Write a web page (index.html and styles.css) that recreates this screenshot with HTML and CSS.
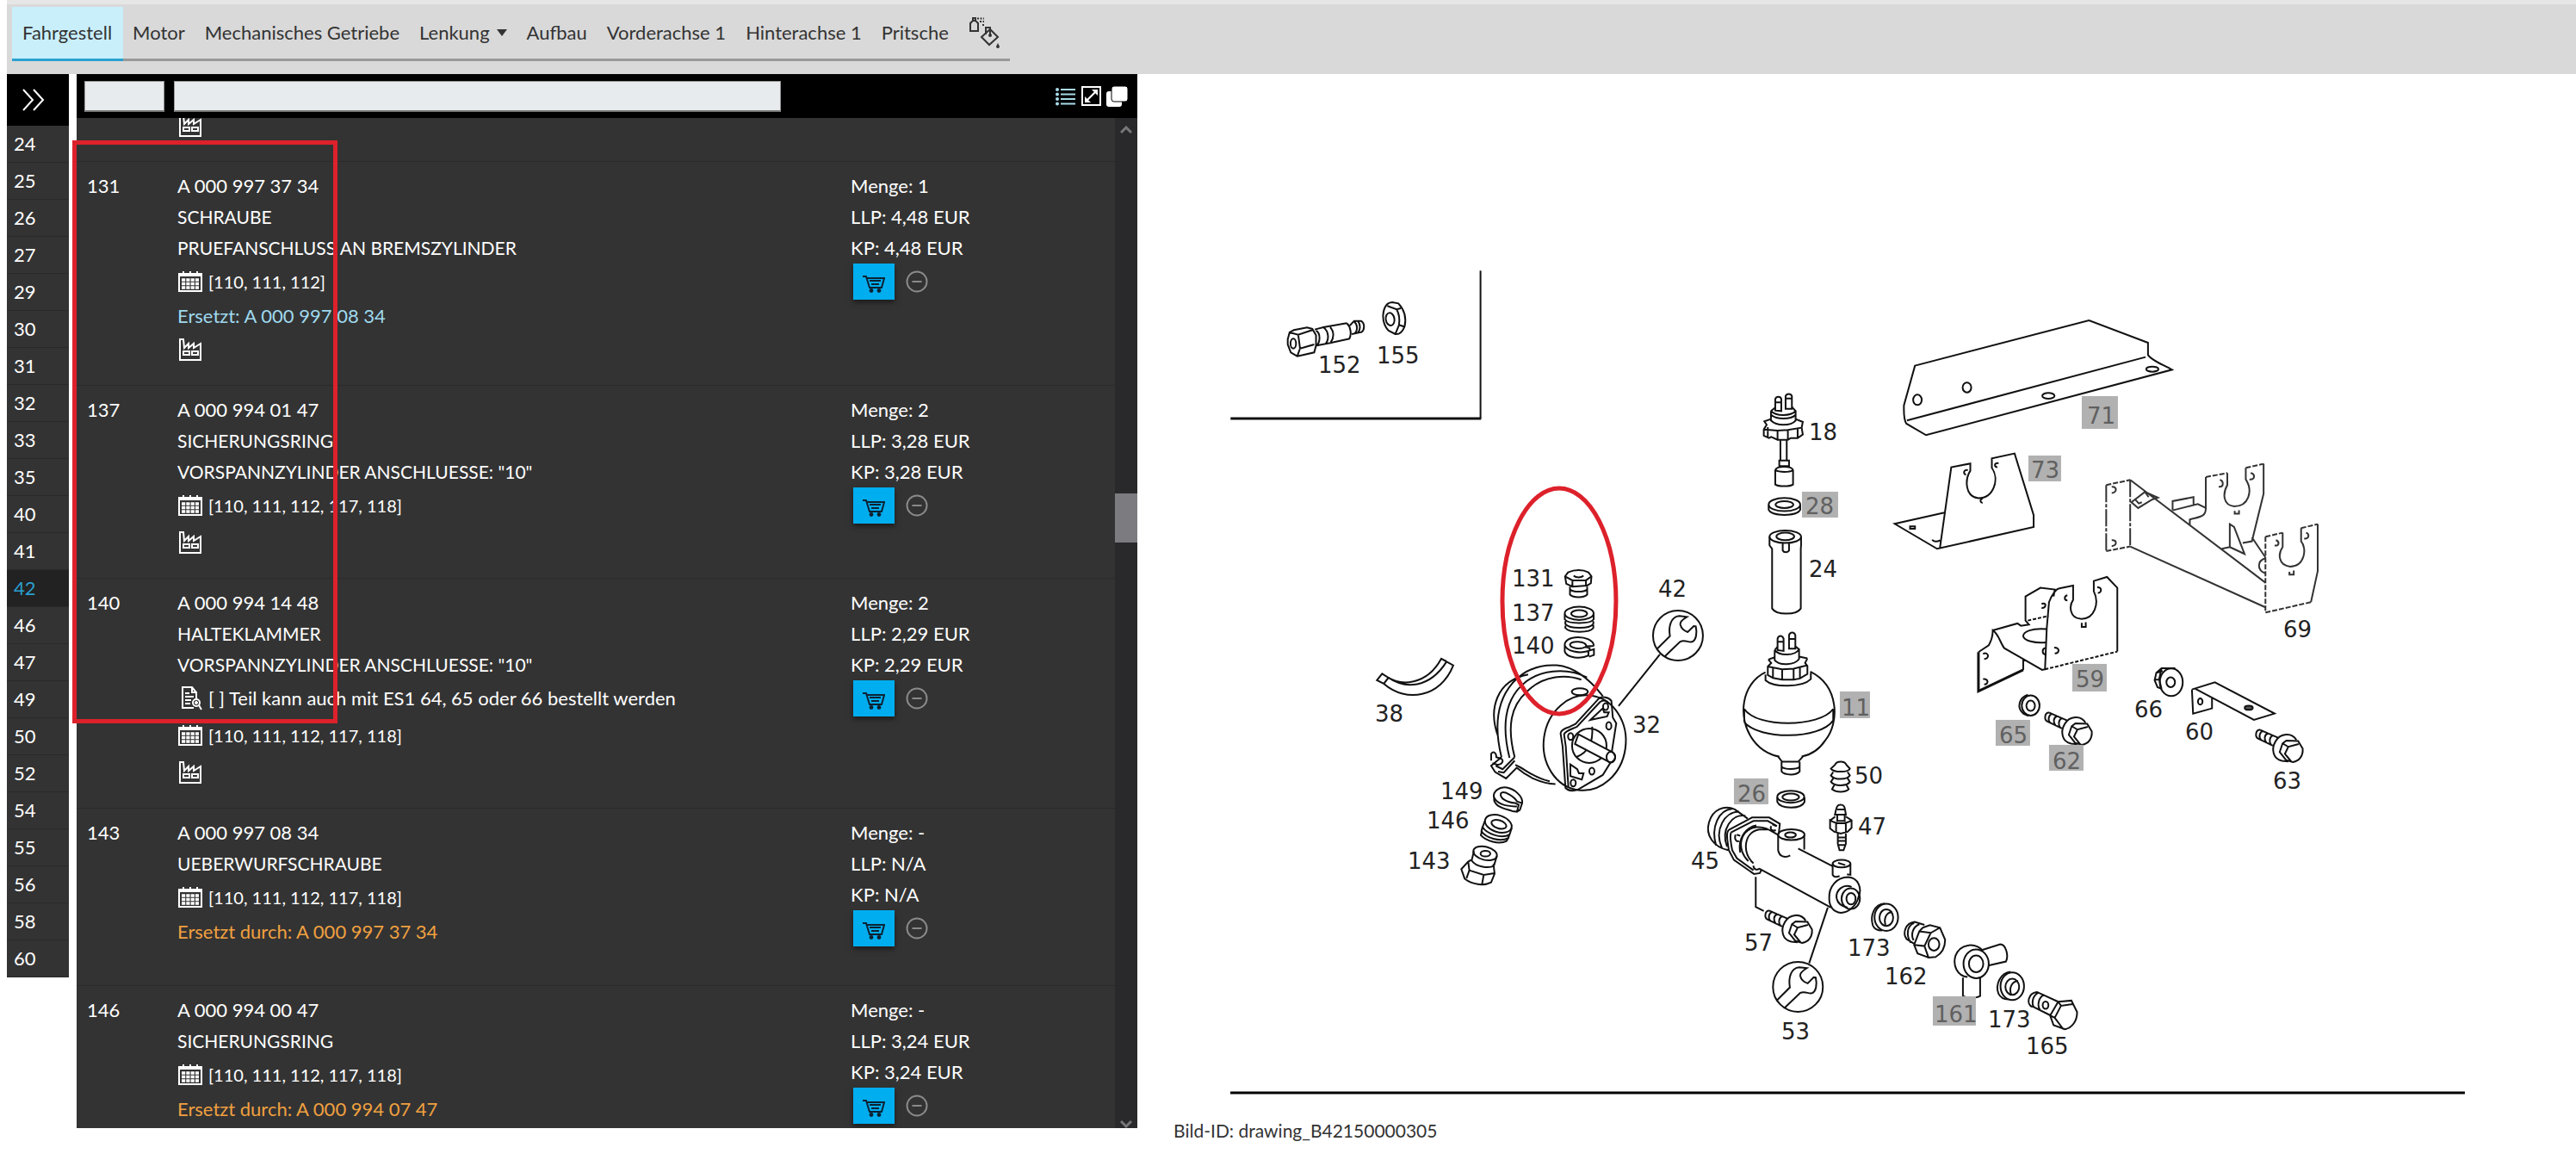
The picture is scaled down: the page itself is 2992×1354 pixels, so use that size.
FILE: index.html
```html
<!DOCTYPE html>
<html lang="de">
<head>
<meta charset="utf-8">
<title>Fahrgestell</title>
<link rel="stylesheet" href="styles.css">
</head>
<body>
<svg class="sprite" aria-hidden="true">
  <symbol id="calendar" viewBox="0 0 28 24">
    <path d="M1 3h26v20H1z" fill="none" stroke="currentColor" stroke-width="2"/>
    <path d="M1 3h26v3H1z" fill="currentColor"/>
    <path d="M6 0v5M14 0v5M22 0v5" stroke="currentColor" stroke-width="2"/>
    <path d="M4 10h20M4 14.500h20M4 19h20" stroke="currentColor" stroke-width="3.400" stroke-dasharray="4.200 1.100"/>
  </symbol>
  <symbol id="factory" viewBox="0 0 26 26">
    <path d="M1 25V1h4l1 10 5-5v5l6-5v5l8-5v19z" fill="none" stroke="currentColor" stroke-width="2"/>
    <path d="M5 15h7v4H5zM15 15h7v4h-7z" fill="none" stroke="currentColor" stroke-width="2"/>
  </symbol>
  <symbol id="note" viewBox="0 0 26 28">
    <path d="M19 14V7l-5-6H3v24h13M14 1v6h5" fill="none" stroke="currentColor" stroke-width="2"/>
    <path d="M6 8h5M6 12h10M6 16h7M6 20h6" stroke="currentColor" stroke-width="2"/>
    <circle cx="19" cy="19" r="4" fill="none" stroke="currentColor" stroke-width="2"/>
    <path d="M22 22l3 5M17 19h4M19 17v4" stroke="currentColor" stroke-width="2"/>
  </symbol>
  <symbol id="cart" viewBox="0 0 26 20">
    <path d="M0 1h4l4 13h14l3-11H5" fill="none" stroke="currentColor" stroke-width="2"/>
    <path d="M8 6h13M10 10h9" stroke="currentColor" stroke-width="2"/>
    <circle cx="10" cy="17.500" r="2.400" fill="currentColor"/>
    <circle cx="19" cy="17.500" r="2.400" fill="currentColor"/>
  </symbol>
  <symbol id="minus" viewBox="0 0 26 26">
    <circle cx="13" cy="13" r="11.500" fill="none" stroke="currentColor" stroke-width="2"/>
    <path d="M7.500 13h11" stroke="currentColor" stroke-width="2"/>
  </symbol>
</svg>

<header class="topbar">
  <nav class="tabs">
    <a class="tab active" href="#">Fahrgestell</a>
    <a class="tab" href="#">Motor</a>
    <a class="tab" href="#">Mechanisches Getriebe</a>
    <a class="tab" href="#">Lenkung <span class="caret"></span></a>
    <a class="tab" href="#">Aufbau</a>
    <a class="tab" href="#">Vorderachse 1</a>
    <a class="tab" href="#">Hinterachse 1</a>
    <a class="tab" href="#">Pritsche</a>
    <a class="tab" href="#" aria-label="Lacke"><svg class="paint" viewBox="0 0 36 36">
      <path d="M2 16V7l3-3h3l3 3v9zM5 4V1h3v3" fill="none" stroke="#333" stroke-width="2"/>
      <path d="M10 1.500h8M13 5h5M16 9h2" stroke="#333" stroke-width="2" stroke-dasharray="2 1.500"/>
      <path d="M25 14l9 9-10 9-9-9zM20 20v-8h5v10" fill="none" stroke="#333" stroke-width="2"/>
      <circle cx="25" cy="21" r="2" fill="#333"/>
      <path d="M34 30l2 4a2 2 0 0 1-4 0z" fill="#333"/>
    </svg></a>
  </nav>
</header>

<main class="workspace">
  <aside class="groups">
    <button class="expand" type="button" aria-label="Aufklappen"><svg width="28" height="26" viewBox="0 0 28 26"><path d="M2 1l11 12L2 25M14 1l11 12-11 12" fill="none" stroke="#fff" stroke-width="2"/></svg></button>
    <a class="group" href="#">24</a>
    <a class="group" href="#">25</a>
    <a class="group" href="#">26</a>
    <a class="group" href="#">27</a>
    <a class="group" href="#">29</a>
    <a class="group" href="#">30</a>
    <a class="group" href="#">31</a>
    <a class="group" href="#">32</a>
    <a class="group" href="#">33</a>
    <a class="group" href="#">35</a>
    <a class="group" href="#">40</a>
    <a class="group" href="#">41</a>
    <a class="group current" href="#">42</a>
    <a class="group" href="#">46</a>
    <a class="group" href="#">47</a>
    <a class="group" href="#">49</a>
    <a class="group" href="#">50</a>
    <a class="group" href="#">52</a>
    <a class="group" href="#">54</a>
    <a class="group" href="#">55</a>
    <a class="group" href="#">56</a>
    <a class="group" href="#">58</a>
    <a class="group" href="#">60</a>
  </aside>

  <section class="parts">
    <div class="toolbar">
      <input class="field field-pos" type="text" aria-label="Position">
      <input class="field field-name" type="text" aria-label="Bezeichnung">
      <div class="tools">
        <button class="tool" type="button" aria-label="Liste"><svg width="24" height="22" viewBox="0 0 24 22"><path d="M6 3h17M6 8.500h17M6 14h17M6 19.500h17" stroke="#a9dcea" stroke-width="2"/><g fill="#a9dcea"><circle cx="2" cy="3" r="2"/><circle cx="2" cy="8.500" r="2"/><circle cx="2" cy="14" r="2"/><circle cx="2" cy="19.500" r="2"/></g></svg></button>
        <button class="tool" type="button" aria-label="Vergrößern"><svg width="23" height="23" viewBox="0 0 23 23"><path d="M1 1h21v21H1z" fill="none" stroke="#fff" stroke-width="2"/><path d="M19 4v7l-7-7zM4 19v-7l7 7z" fill="#fff"/><path d="M6 17L17 6" stroke="#fff" stroke-width="2"/></svg></button>
        <button class="tool" type="button" aria-label="Fenster"><svg width="25" height="26" viewBox="0 0 25 26"><rect x="0" y="7" width="18" height="18" rx="3" fill="#fff"/><rect x="6" y="1" width="19" height="18" rx="3" fill="#fff" stroke="#000"/></svg></button>
      </div>
    </div>
    <div class="scroller">
      <ul class="list">
        <li class="part clipped"><span></span><div><p class="row"><svg class="i-factory"><use href="#factory"/></svg></p></div></li>

        <li class="part">
          <span class="pos">131</span>
          <div class="desc">
            <p>A 000 997 37 34</p><p class="name">SCHRAUBE</p><p class="name">PRUEFANSCHLUSS AN BREMSZYLINDER</p>
            <p class="row codes"><svg class="i-cal"><use href="#calendar"/></svg>[110, 111, 112]</p>
            <p class="replaces">Ersetzt: A 000 997 08 34</p>
            <p class="row"><svg class="i-factory"><use href="#factory"/></svg></p>
          </div>
          <div class="price"><p>Menge: 1</p><p>LLP: 4,48 EUR</p><p>KP: 4,48 EUR</p>
            <div class="actions"><button class="buy" type="button" aria-label="In den Warenkorb"><svg class="i-cart"><use href="#cart"/></svg></button><button class="less" type="button" aria-label="Entfernen"><svg class="i-minus"><use href="#minus"/></svg></button></div></div>
        </li>

        <li class="part">
          <span class="pos">137</span>
          <div class="desc">
            <p>A 000 994 01 47</p><p class="name">SICHERUNGSRING</p><p class="name">VORSPANNZYLINDER ANSCHLUESSE: "10"</p>
            <p class="row codes"><svg class="i-cal"><use href="#calendar"/></svg>[110, 111, 112, 117, 118]</p>
            <p class="row"><svg class="i-factory"><use href="#factory"/></svg></p>
          </div>
          <div class="price"><p>Menge: 2</p><p>LLP: 3,28 EUR</p><p>KP: 3,28 EUR</p>
            <div class="actions"><button class="buy" type="button" aria-label="In den Warenkorb"><svg class="i-cart"><use href="#cart"/></svg></button><button class="less" type="button" aria-label="Entfernen"><svg class="i-minus"><use href="#minus"/></svg></button></div></div>
        </li>

        <li class="part">
          <span class="pos">140</span>
          <div class="desc">
            <p>A 000 994 14 48</p><p class="name">HALTEKLAMMER</p><p class="name">VORSPANNZYLINDER ANSCHLUESSE: "10"</p>
            <p class="row"><svg class="i-note"><use href="#note"/></svg>[ ] Teil kann auch mit ES1 64, 65 oder 66 bestellt werden</p>
            <p class="row codes"><svg class="i-cal"><use href="#calendar"/></svg>[110, 111, 112, 117, 118]</p>
            <p class="row"><svg class="i-factory"><use href="#factory"/></svg></p>
          </div>
          <div class="price"><p>Menge: 2</p><p>LLP: 2,29 EUR</p><p>KP: 2,29 EUR</p>
            <div class="actions"><button class="buy" type="button" aria-label="In den Warenkorb"><svg class="i-cart"><use href="#cart"/></svg></button><button class="less" type="button" aria-label="Entfernen"><svg class="i-minus"><use href="#minus"/></svg></button></div></div>
        </li>

        <li class="part">
          <span class="pos">143</span>
          <div class="desc">
            <p>A 000 997 08 34</p><p class="name">UEBERWURFSCHRAUBE</p>
            <p class="row codes"><svg class="i-cal"><use href="#calendar"/></svg>[110, 111, 112, 117, 118]</p>
            <p class="replaced">Ersetzt durch: A 000 997 37 34</p>
          </div>
          <div class="price"><p>Menge: -</p><p>LLP: N/A</p><p>KP: N/A</p>
            <div class="actions"><button class="buy" type="button" aria-label="In den Warenkorb"><svg class="i-cart"><use href="#cart"/></svg></button><button class="less" type="button" aria-label="Entfernen"><svg class="i-minus"><use href="#minus"/></svg></button></div></div>
        </li>

        <li class="part">
          <span class="pos">146</span>
          <div class="desc">
            <p>A 000 994 00 47</p><p class="name">SICHERUNGSRING</p>
            <p class="row codes"><svg class="i-cal"><use href="#calendar"/></svg>[110, 111, 112, 117, 118]</p>
            <p class="replaced">Ersetzt durch: A 000 994 07 47</p>
          </div>
          <div class="price"><p>Menge: -</p><p>LLP: 3,24 EUR</p><p>KP: 3,24 EUR</p>
            <div class="actions"><button class="buy" type="button" aria-label="In den Warenkorb"><svg class="i-cart"><use href="#cart"/></svg></button><button class="less" type="button" aria-label="Entfernen"><svg class="i-minus"><use href="#minus"/></svg></button></div></div>
        </li>
      </ul>
      <div class="scrollbar">
        <svg class="arrow" viewBox="0 0 14 10"><path d="M1 8l6-6 6 6" fill="none" stroke="#77777b" stroke-width="3"/></svg>
        <div class="thumb"></div>
        <svg class="arrow" viewBox="0 0 14 10"><path d="M1 2l6 6 6-6" fill="none" stroke="#77777b" stroke-width="3"/></svg>
      </div>
    </div>
    <div class="marker"></div>
  </section>

  <figure class="picture">
    <svg class="drawing" viewBox="1321 86 1671 1190" role="img" aria-label="Explosionszeichnung">
      <defs>
        <g id="bolt">
          <path d="M14-17C-2-20-6 8 8 14L58 38M14-17L76 10M24-14C10-8 8 10 18 19M42-6C28 0 26 16 36 28M58 2C46 8 44 24 52 35"/>
          <path d="M140 18C124-10 84-6 68 22C50 52 60 84 90 91L112 93"/>
          <path d="M92 30L105 20L146 22L162 48C164 74 150 92 128 95L104 88L82 60ZM92 30L112 42L148 32M112 42L100 66L122 93"/>
        </g>
        <g id="wrench">
          <circle r="87"/>
          <path d="M-72 46L-28 2C-34-30-25-66 5-68L31-65C16-56 6-48 8-38C12-22 22-16 34-12L55-33L62-32C68-6 62 14 52 21C38 28 26 12 7 22L-46 73"/>
        </g>
      </defs>

      <!-- inset with 152 / 155, upper stack 131-140 -->
      <g transform="translate(1420 300) scale(.3571 .3333)">
        <path d="M839 43V558"/><path class="bold" d="M26 558H841"/>
        <path d="M212 282L218 258L232 250L275 241L292 246L304 268V304L298 328L243 341L222 328L212 300ZM218 258L246 266L292 250M246 266L252 314L298 300M252 314L243 341M304 252C320 262 318 296 304 304M300 248L328 240L404 226M306 304L350 295L414 280M328 240C348 256 346 286 334 299M350 240C364 256 362 278 352 292M404 226C418 240 420 266 412 281M414 234L428 218L450 218C464 226 462 250 452 257L430 262L420 264M428 220C440 232 440 252 430 262M440 218C450 232 448 250 440 260"/>
        <ellipse cx="230" cy="297" rx="9" ry="17"/>
        <path d="M522 200C524 170 534 154 552 153L572 157C592 180 598 210 592 238C584 258 574 266 562 264L540 252C526 236 522 218 522 200ZM536 166L566 178L580 174M566 178C576 196 576 216 574 232L590 238M574 232L562 264"/>
        <ellipse cx="545" cy="212" rx="14" ry="22" transform="rotate(-8 545 212)"/>
        <path d="M1114 1108L1124 1094C1145 1084 1172 1084 1190 1094L1200 1108L1198 1132L1186 1140L1138 1144L1118 1134ZM1114 1108L1138 1122H1182L1200 1108M1138 1122V1144M1182 1122V1140M1142 1106C1150 1114 1166 1114 1174 1106M1130 1144V1172C1142 1184 1174 1184 1186 1172V1144M1130 1154C1142 1164 1174 1164 1186 1154"/>
        <ellipse cx="1160" cy="1237" rx="47" ry="23"/><ellipse cx="1160" cy="1238" rx="26" ry="12"/>
        <path d="M1113 1240V1258C1125 1275 1195 1275 1207 1258V1240M1115 1264V1274C1128 1292 1194 1292 1206 1274V1264M1115 1280V1288C1128 1306 1194 1306 1206 1288V1278"/>
        <path d="M1208 1350C1206 1330 1180 1320 1156 1320C1130 1320 1112 1332 1113 1348V1370C1120 1392 1166 1398 1190 1384V1368C1160 1378 1120 1370 1113 1348M1190 1368L1208 1362V1382L1192 1388M1208 1350L1184 1352C1180 1332 1134 1332 1130 1346C1130 1358 1164 1364 1180 1354L1194 1358V1368"/>
      </g>

      <!-- brake cylinder 32, clamp 38, lower stack 143-149 -->
      <g transform="translate(1560 740) scale(.3333)">
        <path d="M118 150L136 127L158 141L142 162ZM158 141C200 168 290 170 342 75L384 98C340 210 220 230 142 162M158 141C215 180 300 180 360 86M342 75L360 84"/>
        <path d="M540 345C505 250 535 150 645 130M552 418C528 320 530 230 590 160C640 105 700 95 745 98C800 103 850 135 905 205M580 420C555 320 560 230 620 170C680 110 780 105 850 140M598 418C570 310 585 240 640 190C700 130 780 130 830 148"/>
        <ellipse cx="842" cy="368" rx="143" ry="166" transform="rotate(8 842 368)"/>
        <ellipse cx="825" cy="190" rx="28" ry="12"/>
        <path d="M552 418L516 448L530 470L568 492L605 455C640 485 690 510 740 512M598 418L556 460L532 448M598 430L560 472L540 468M516 430V406C524 396 534 402 534 418L552 424C562 430 552 446 538 444L520 440M600 445C630 455 660 490 720 502"/>
        <path d="M775 525L765 380L758 335C758 325 770 318 790 312L810 302L890 215C900 205 925 208 935 222L940 280L952 300L930 440L905 480L820 530C800 538 785 535 775 525Z"/>
        <path d="M785 520L776 380L770 338C774 326 792 322 815 312L895 226C908 216 922 222 926 232"/>
        <circle cx="858" cy="378" r="60"/><path d="M868 312C872 360 860 400 812 418"/>
        <path class="white" d="M820 338L938 400C955 412 950 430 932 437L808 372Z"/><ellipse cx="933" cy="418" rx="15" ry="19"/>
        <ellipse cx="915" cy="242" rx="9" ry="12"/><ellipse cx="926" cy="309" rx="9" ry="13"/><ellipse cx="793" cy="346" rx="9" ry="12"/><ellipse cx="867" cy="467" rx="9" ry="12"/><ellipse cx="802" cy="508" rx="9" ry="12"/>
        <path d="M862 288L905 248L910 262H926L920 276ZM792 443V484L832 496L838 474H822L816 460Z"/>
        <path d="M1104 60L960 240"/>
        <path d="M526 560C520 536 546 520 570 524C600 530 628 556 624 578L606 572C596 556 560 532 550 544C544 560 570 576 600 578L612 584L606 608L590 606C560 596 524 590 526 560ZM526 558C540 588 580 588 606 590M624 578L616 602L606 608"/>
        <ellipse cx="541" cy="650" rx="48" ry="29" transform="rotate(18 541 650)"/><ellipse cx="543" cy="652" rx="27" ry="14" transform="rotate(18 543 652)"/>
        <path d="M494 640L486 662C500 684 550 704 580 688L588 664M486 660L482 676C498 700 546 714 576 700L580 686M484 674L480 690C498 710 544 724 570 710L576 698"/>
        <ellipse cx="495" cy="753" rx="42" ry="23" transform="rotate(14 495 753)"/><ellipse cx="496" cy="754" rx="17" ry="10"/>
        <path d="M456 745L448 778C462 800 510 808 526 795L536 762M446 776L436 782L412 808L424 842C450 862 490 868 516 854L528 824L524 790M436 782L440 812L430 840M440 812L490 828L528 822M490 828L484 862"/>
      </g>

      <!-- reservoir column 18, 28, 24, 11, 26, 50 -->
      <g transform="translate(1920 440) scale(.3333)">
        <path d="M426 110V70C430 60 444 60 447 70V112ZM462 104V60C466 50 480 50 484 60V104ZM426 82H447M462 68H484"/>
        <path d="M411 112C430 132 480 130 497 112L484 98M411 112L426 100M411 112V145C430 165 480 165 497 145V112M413 126C430 142 480 142 496 126M411 140L388 148L396 160L386 176V198L404 206L412 202L434 212L470 212L480 206L504 206L522 194L518 170L522 150L497 140M400 168V204M434 178V212M470 178V212M504 170V206M388 176L434 180L470 178L518 170"/>
        <path d="M444 214V284M466 214V284M440 284H474V304H440ZM426 318C430 302 484 302 488 318V368C476 376 438 376 426 368ZM426 318C440 326 476 326 488 318"/>
        <ellipse cx="458" cy="438" rx="55" ry="23"/><ellipse cx="458" cy="438" rx="31" ry="12"/><path d="M403 440V456C414 480 502 480 513 456V440"/>
        <ellipse cx="461" cy="550" rx="55" ry="22"/><ellipse cx="461" cy="549" rx="31" ry="13"/><path d="M406 550V580L415 592V800C430 824 500 824 515 800V592L516 580V550M452 572V598C456 606 468 606 474 598V572"/>
        <path d="M434 945V905C438 893 450 893 455 905V948ZM474 940V893C478 881 492 881 496 893V940ZM434 916H455M474 906H496"/>
        <path d="M424 945C440 966 494 966 509 942L496 932M424 945L434 934M424 945V980C440 1000 494 998 509 976V942M402 978L424 970M509 968L538 974M402 978L412 990L400 1002V1032L418 1042L450 1048H490L512 1044L538 1028V1000L530 990L538 974M418 1004V1042M450 1010V1048M490 1010V1048M512 1004V1044M400 1002L450 1012L490 1010L538 998"/>
        <path d="M392 1030V1050C420 1076 520 1076 550 1046V1024M392 1022C310 1060 290 1180 350 1260C380 1300 420 1314 440 1316M548 1020C650 1070 650 1200 600 1260C580 1290 550 1310 518 1316M318 1150C360 1216 580 1216 628 1150M318 1196C370 1258 580 1258 628 1190M318 1150V1196M628 1150V1196"/>
        <path d="M436 1316L450 1334H506L522 1316M448 1334V1368C460 1382 500 1382 511 1368V1334M448 1352C460 1362 500 1362 511 1352"/>
        <ellipse cx="480" cy="1456" rx="47" ry="21"/><ellipse cx="480" cy="1457" rx="29" ry="12"/><path d="M433 1458V1474C444 1500 516 1500 528 1474V1458"/>
        <path d="M634 1345C640 1330 668 1330 674 1345L686 1358C680 1372 630 1372 620 1358ZM628 1370L620 1382C632 1398 676 1398 686 1382L678 1370M628 1392L620 1404C632 1420 676 1420 686 1404L678 1392M632 1414L624 1430C640 1442 668 1442 682 1430L674 1414"/>
      </g>

      <!-- master cylinder 45 and the line fittings -->
      <g transform="translate(1940 900) scale(.3333)">
        <path d="M202 262C150 250 122 210 135 165C148 118 190 104 225 120L270 152M215 118C170 122 140 180 160 246M240 128C190 128 152 190 180 254M262 142C215 134 175 190 198 250"/>
        <path d="M206 190L285 148H345L382 170L378 206M206 190C192 200 200 230 204 262L222 296L292 345L312 342L318 330M212 200L290 160H340L372 178M212 200C206 214 212 240 216 262L232 290L290 332"/>
        <path d="M272 300C230 260 240 190 300 182C330 178 350 195 378 210M290 308C250 270 255 200 310 190L340 190M244 270C236 230 256 184 300 176M228 208C222 222 230 234 240 230M244 212L232 208M352 178C346 190 356 196 368 192M370 178L356 172M290 316C290 328 300 334 312 326"/>
        <ellipse cx="422" cy="208" rx="46" ry="19"/><ellipse cx="419" cy="209" rx="19" ry="9"/><path d="M376 210V262C380 285 400 290 418 280M467 210V260M446 256L566 318M310 326L560 462"/>
        <ellipse cx="597" cy="309" rx="31" ry="13"/><path d="M585 306L610 314M566 310V348C570 356 580 356 590 352M628 310V348L616 346"/>
        <path class="white" d="M554 430C552 390 580 356 620 356C655 358 670 395 656 425C650 455 620 480 595 480C570 478 554 460 554 430Z"/>
        <path d="M632 390C605 378 575 400 580 430C584 450 600 458 618 462"/><ellipse cx="629" cy="431" rx="32" ry="36"/><ellipse cx="630" cy="431" rx="16" ry="20"/>
        <path d="M298 355V460L326 474M549 462L484 656"/>
        <path d="M574 138C580 112 580 104 594 104C608 104 608 112 612 138ZM582 120H608M582 140V160H608V140M558 158L575 145M612 145L632 158V184L618 198L594 204L572 198L557 186V158C580 172 610 172 632 158M578 168V198M612 168V200M584 204V240L590 262H604L612 240V204M584 218H612M584 230H612M586 244H610"/>
        <ellipse cx="753" cy="496" rx="41" ry="47"/><ellipse cx="753" cy="497" rx="24" ry="29"/><path d="M748 448C710 450 696 490 706 524C712 538 722 542 738 542M774 478C752 478 744 500 750 522"/>
        <path d="M850 588L824 572C808 550 820 516 852 512L886 522M850 516C824 526 822 560 838 584M868 520C844 530 838 556 848 576M880 532L868 545L850 592L862 622L900 636M880 532L905 523L940 532L958 574C958 600 946 622 925 634L900 636L884 630M868 545L908 550L940 532M908 550L886 596L850 592M886 596L900 636"/><ellipse cx="919" cy="590" rx="19" ry="22"/>
        <ellipse cx="1066" cy="658" rx="44" ry="50"/><ellipse cx="1066" cy="658" rx="25" ry="29"/><path d="M1090 612C1060 582 1010 588 994 630C984 664 1000 700 1036 704M1086 610L1150 590C1170 590 1180 630 1170 650L1108 664M1020 706V770C1034 778 1066 778 1080 770V708"/>
        <ellipse cx="1192" cy="736" rx="41" ry="48"/><ellipse cx="1192" cy="738" rx="24" ry="28"/><path d="M1186 686C1150 690 1132 730 1144 762C1152 778 1164 782 1178 782M1212 718C1190 718 1180 744 1188 764"/>
        <path d="M1262 808C1240 800 1246 760 1278 756L1352 790M1284 758C1262 768 1258 796 1268 810M1302 766C1284 776 1278 800 1288 818M1262 806L1326 838M1352 790L1398 786L1418 826C1418 856 1402 880 1376 886L1336 872L1324 838ZM1352 790L1362 804L1402 798M1362 804L1340 846L1370 886M1340 846L1324 838"/><ellipse cx="1308" cy="802" rx="10" ry="13"/>
        <use href="#wrench" x="445" y="738"/>
        <use href="#bolt" x="332" y="490"/>
      </g>
      <use href="#wrench" transform="translate(1949 738) scale(.3333)"/>

      <!-- plates 71, 73 and frame 69 -->
      <g transform="translate(2180 350) scale(.3571 .3333)">
        <path d="M124 224L690 66L882 144V186C890 204 930 220 960 238L160 466L96 426C86 410 88 380 88 362ZM98 415L874 194"/>
        <ellipse cx="132" cy="343" rx="14" ry="18"/><ellipse cx="293" cy="300" rx="14" ry="17"/><ellipse cx="558" cy="329" rx="20" ry="10"/><ellipse cx="896" cy="236" rx="20" ry="9"/>
        <path d="M205 860L242 578L304 565V590C286 620 286 680 330 686C380 686 400 620 374 580V547L448 530L510 745V786L196 862L58 775L220 736M296 588C282 584 280 602 290 604M396 564C382 562 380 576 392 578M344 686C332 692 338 702 344 702M108 784H124V792H108ZM180 830C184 838 196 838 206 832"/>
        <g class="thin">
        <path d="M746 640L824 622M746 870L824 854" stroke-dasharray="6 2"/>
        <path d="M746 640V870M824 622V854" stroke-dasharray="20 2 4 2"/>
        <path d="M824 622L1264 980M824 854L1264 1066M764 646C784 644 780 668 764 668M764 832C784 830 780 854 764 852M828 700L872 664L914 684L896 690L850 720ZM840 690L852 704L862 700M872 664L884 682M962 728V696L1030 682V708M962 728L1044 706L1070 720C1070 752 1050 750 1018 760V778M1070 720V612M1140 598V640C1124 670 1126 710 1162 714C1210 714 1224 660 1200 620V580M1258 566V670L1220 836L1190 842M1148 776L1162 786L1196 880L1148 856ZM1148 856L1122 862M1220 822L1264 892M1264 895C1236 904 1236 936 1264 948M1320 806V856C1304 880 1306 920 1344 924C1392 924 1400 860 1380 836V790M1434 776V940L1412 1048"/>
        <path d="M1070 612L1140 598M1200 580L1258 566M1264 820L1320 806M1380 790L1434 776M1264 820V1084L1412 1048" stroke-dasharray="6 2"/>
        <path d="M1112 645C1130 650 1128 625 1116 622M1212 620C1230 624 1232 602 1216 598M1164 730V740H1178V728M1294 850C1310 854 1310 836 1298 832M1390 826C1406 830 1408 810 1396 806M1342 942V952H1356V938"/>
        </g>
      </g>

      <!-- bracket 59 and small parts -->
      <g transform="translate(2260 640) scale(.3333)">
        <path class="bold" d="M114 352V488L270 414"/>
        <path d="M114 352L150 328C160 310 164 290 164 276C185 290 190 320 204 338L336 414L346 412L352 270L360 178C370 150 385 132 396 130L444 120V170C430 190 430 232 470 236C520 238 536 180 516 140V104L562 90L598 128V350M270 414V378M164 276L250 252L262 260L290 256L278 242V158L330 128L380 134L376 158"/>
        <path d="M346 412L598 350M286 242L358 226" stroke-dasharray="4 2"/>
        <path d="M352 272C300 268 270 280 270 296C272 312 310 322 350 318M130 358C150 348 154 376 134 376M130 446C150 442 150 466 134 464M334 184C352 176 352 200 334 198M424 154C412 156 412 172 424 172M528 126C546 124 544 146 530 146M474 250V264H488V248M378 336C400 336 396 358 380 356M348 338C334 340 336 358 346 360"/>
        <ellipse cx="296" cy="538" rx="31" ry="35"/><ellipse cx="296" cy="539" rx="15" ry="18"/><path d="M286 500C256 510 246 545 270 566L288 574"/>
        <use href="#bolt" x="347" y="580"/><use href="#bolt" x="1082" y="640"/>
        <ellipse cx="786" cy="457" rx="40" ry="48"/><ellipse cx="784" cy="457" rx="15" ry="17"/><path d="M800 408H752L734 424L728 450L738 474L752 480M752 408L744 446L752 480M734 424L756 418M728 448H744"/>
        <path d="M858 482L938 457L1146 566L1074 588L870 480M858 482L862 566L928 548V512"/><ellipse cx="887" cy="524" rx="8" ry="11"/><ellipse class="filled" cx="1056" cy="546" rx="14" ry="7"/>
      </g>

      <path class="frame" d="M1429 1269H2863"/>
      <ellipse class="ring" cx="1811" cy="698" rx="66" ry="131"/>

      <g class="tags"><rect x="2093" y="571" width="42" height="30"/><rect x="2137" y="803" width="35" height="31"/><rect x="2014" y="904" width="40" height="30"/><rect x="2245" y="1157" width="50" height="34"/><rect x="2418" y="460" width="42" height="38"/><rect x="2356" y="529" width="38" height="30"/><rect x="2407" y="771" width="40" height="32"/><rect x="2318" y="836" width="40" height="30"/><rect x="2380" y="865" width="40" height="30"/></g>
      <g class="labels">
        <text x="1531" y="433">152</text><text x="1599" y="422">155</text><text x="1756" y="681">131</text><text x="1756" y="721">137</text><text x="1756" y="759">140</text><text x="1926" y="693">42</text>
        <text x="1597" y="838">38</text><text x="1896" y="851">32</text><text x="1673" y="928">149</text><text x="1657" y="962">146</text><text x="1635" y="1009">143</text><text x="1964" y="1009">45</text>
        <text x="2101" y="511">18</text><text x="2101" y="670">24</text><text x="2154" y="910">50</text><text x="2158" y="969">47</text><text x="2026" y="1104">57</text><text x="2146" y="1110">173</text><text x="2189" y="1143">162</text><text x="2069" y="1207">53</text><text x="2309" y="1193">173</text><text x="2353" y="1224">165</text>
        <text x="2652" y="740">69</text><text x="2479" y="833">66</text><text x="2538" y="859">60</text><text x="2640" y="916">63</text>
      </g>
      <g class="labels muted">
        <text x="2097" y="597">28</text><text x="2139" y="831">11</text><text x="2018" y="931">26</text><text x="2247" y="1187">161</text><text x="2424" y="492">71</text><text x="2359" y="555">73</text><text x="2411" y="798">59</text><text x="2322" y="863">65</text><text x="2384" y="893">62</text>
      </g>
    </svg>
    <figcaption class="caption">Bild-ID: drawing_B42150000305</figcaption>
  </figure>
</main>
</body>
</html>
```
FILE: styles.css
```css
* { box-sizing: border-box; }
body {
  margin: 0;
  height: 100vh;
  display: flex;
  flex-direction: column;
  background: #fff;
  color: #333;
  font: 22px/36px Lato, "Liberation Sans", sans-serif;
}
p, ul, figure { margin: 0; padding: 0; }
a { color: inherit; text-decoration: none; }
button { border: 0; padding: 0; background: none; font: inherit; cursor: pointer; }
.sprite { display: none; }

.topbar {
  flex: none;
  height: 86px;
  margin-left: 8px;
  padding: 3px 6px 0;
  border-top: 5px solid #e6e6e6;
  background: #d9d9d9;
}
.tabs { display: flex; width: max-content; }
.tab {
  display: flex;
  align-items: center;
  height: 63px;
  padding: 0 12px 0 11px;
  border-bottom: 3px solid #999;
}
.tab.active { padding: 0 13px 0 12px; background: #c9effb; border-color: #2aa0d0; }
.caret {
  margin-left: 8px;
  border: 6px solid transparent;
  border-top: 8px solid #333;
  border-bottom: 0;
}
.paint { width: 36px; height: 36px; }

.workspace { flex: 1; min-height: 0; display: flex; padding-left: 8px; }
.groups { flex: none; width: 72px; color: #fff; }
.expand {
  display: flex;
  align-items: center;
  width: 100%;
  height: 60px;
  padding-left: 17px;
  background: #000;
}
.group {
  display: block;
  height: 43px;
  padding-left: 8px;
  border-bottom: 1px solid #2a2a2a;
  background: #333;
  line-height: 42px;
}
.group.current { background: #222; color: #2a9fd0; }

.parts {
  position: relative;
  flex: none;
  display: flex;
  flex-direction: column;
  width: 41.18vw;
  margin: 0 0 44px 9px;
  background: #333;
  color: #fff;
}
.toolbar {
  flex: none;
  display: flex;
  align-items: center;
  height: 51px;
  padding: 0 11px 0 9px;
  background: #000;
}
.field {
  height: 36px;
  border: 1px solid #999;
  border-bottom: 2px solid #777;
  background: #e7ebee;
  font: inherit;
}
.field-pos { width: 93px; }
.field-name { width: 705px; margin-left: 11px; }
.tools { display: flex; align-items: center; gap: 6px; margin-left: auto; }
.tool { display: flex; }

.scroller { flex: 1; min-height: 0; display: flex; }
.list { flex: 1; overflow: hidden; list-style: none; }
.part {
  display: grid;
  grid-template-columns: 105px 1fr 307px;
  padding: 10px 0 19px 12px;
  border-bottom: 1px solid #2b2b2b;
}
.part.clipped { margin-top: -12px; padding-top: 0; }
.name { font-size: 21px; }
.row { display: flex; align-items: center; gap: 7px; height: 43px; padding-bottom: 2px; }
.row.codes { font-size: 20px; }
.i-cal { width: 28px; height: 24px; margin-left: 1px; }
.i-factory { width: 26px; height: 26px; margin-left: 2px; }
.i-note { width: 26px; height: 28px; margin-left: 3px; }
.replaces { color: #9fd9ee; }
.replaced { color: #f0a040; }
.price { padding-bottom: 26px; }
.actions { display: flex; align-items: center; gap: 13px; padding-left: 3px; }
.buy {
  display: flex;
  align-items: center;
  justify-content: center;
  width: 48px;
  height: 42px;
  padding-top: 6px;
  background: #00adef;
  box-shadow: 0 3px 6px rgba(0, 0, 0, .5);
  color: #0c2233;
}
.i-cart { width: 26px; height: 20px; }
.less { display: flex; color: #8a8a8a; }
.i-minus { width: 26px; height: 26px; }

.scrollbar {
  flex: none;
  display: flex;
  flex-direction: column;
  align-items: center;
  justify-content: space-between;
  width: 26px;
  padding-top: 9px;
  background: #29292c;
}
.arrow { width: 14px; height: 10px; }
.thumb { width: 26px; height: 57px; margin-bottom: 254px; background: #7c7c80; }
.marker {
  position: absolute;
  left: -5px;
  top: 77px;
  width: 308px;
  height: 677px;
  border: 5px solid #dd212b;
}

.picture { flex: 1; min-width: 0; }
.drawing { display: block; width: 100%; height: auto; }
.drawing path, .drawing ellipse, .drawing circle {
  fill: none;
  stroke: #111;
  stroke-width: 2px;
  vector-effect: non-scaling-stroke;
}
.drawing .thin path { stroke: #333; }
.drawing .bold { stroke-width: 3px; }
.drawing .white { fill: #fff; }
.drawing .filled { fill: #555; }
.drawing .frame { stroke: #000; stroke-width: 3px; }
.drawing .ring { stroke: #dd212b; stroke-width: 5px; }
.tags rect { fill: #b1b1b1; }
.labels { font: 26px "DejaVu Sans", sans-serif; fill: #222; }
.labels.muted { fill: #606060; }
.caption { padding: 19px 42px 0; font-size: 21px; }
```
